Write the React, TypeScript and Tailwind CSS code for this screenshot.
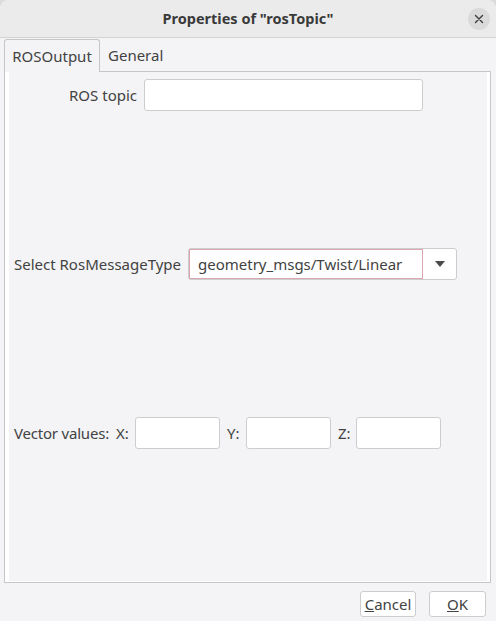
import React from 'react';

const font = { fontFamily: '"Noto Sans", "Open Sans", sans-serif' };

const TextBox: React.FC<{ className?: string }> = ({ className = '' }) => (
  <div className={`h-[32px] rounded-[3px] border border-[#cdcdcd] bg-white ${className}`} />
);

const App: React.FC = () => {
  return (
    <div className="w-[496px] h-[621px] bg-[#dcdcdc] text-[#424242] text-[15px]" style={font}>
      <div className="flex h-full flex-col overflow-hidden rounded-t-[9px] bg-[#f4f4f6]">
        {/* title bar */}
        <div className="relative flex h-[38px] shrink-0 items-center justify-center border-b border-[#d4d4d4] bg-[#ebebeb]">
          <span className="text-[14.5px] font-bold text-[#3a3a3a]">Properties of "rosTopic"</span>
          <div className="absolute right-[6px] top-[8px] flex h-[22px] w-[22px] items-center justify-center rounded-full bg-[#dadada]">
            <svg width="10" height="10" viewBox="0 0 10 10">
              <path d="M1.5 1.5 L8.5 8.5 M8.5 1.5 L1.5 8.5" stroke="#3a3a3a" strokeWidth="1.4" strokeLinecap="round" />
            </svg>
          </div>
        </div>

        {/* tabs */}
        <div className="flex h-[33px] shrink-0 items-end pl-[4px] pt-[1px]">
          <div className="relative z-10 -mb-px flex h-[33px] w-[96px] items-center justify-center rounded-t-[3px] border border-b-0 border-[#c6c6c6] bg-[#f4f4f6]">
            ROSOutput
          </div>
          <div className="flex h-[32px] items-center pl-[8px]">General</div>
        </div>

        {/* panel */}
        <div className="ml-[4px] mr-[5px] h-[512px] shrink-0 border border-[#c6c6c6] bg-white">
          <div className="ml-[4px] mr-[3px] h-[509px] bg-[#f4f4f6] px-[5px] pt-[7px]">
            <div className="flex items-center">
              <div className="w-[130px] pr-[7px] text-right leading-[28px]">ROS topic</div>
              <TextBox className="h-[31px] w-[279px]" />
            </div>

            <div className="mt-[137px] flex items-center">
              <div className="w-[174px]">Select RosMessageType</div>
              <div className="flex h-[32px] w-[269px] rounded-[3px] border border-[#cdcdcd] bg-white">
                <div className="flex w-[234px] items-center border border-[#d9a5b1] pl-[8px]">
                  geometry_msgs/Twist/Linear
                </div>
                <div className="flex flex-1 items-center justify-center">
                  <svg width="10" height="6" viewBox="0 0 10 6">
                    <path d="M0 0 H10 L5 6 Z" fill="#4a4a4a" />
                  </svg>
                </div>
              </div>
            </div>

            <div className="mt-[137px] flex items-center">
              <div className="w-[102px] tracking-[-0.2px]">Vector values:</div>
              <div className="w-[19px]">X:</div>
              <TextBox className="w-[85px]" />
              <div className="w-[26px] pl-[7px]">Y:</div>
              <TextBox className="w-[85px]" />
              <div className="w-[25px] pl-[7px]">Z:</div>
              <TextBox className="w-[85px]" />
            </div>
          </div>
        </div>

        {/* buttons */}
        <div className="flex flex-1 items-start justify-end gap-[13px] pr-[10px] pt-[8px]">
          <div className="flex h-[26px] w-[56px] items-center justify-center rounded-[3px] border border-[#cdcdcd] bg-white">
            <span><span className="underline">C</span>ancel</span>
          </div>
          <div className="flex h-[26px] w-[57px] items-center justify-center rounded-[3px] border border-[#cdcdcd] bg-white">
            <span><span className="underline">O</span>K</span>
          </div>
        </div>
      </div>
    </div>
  );
};

export default App;
